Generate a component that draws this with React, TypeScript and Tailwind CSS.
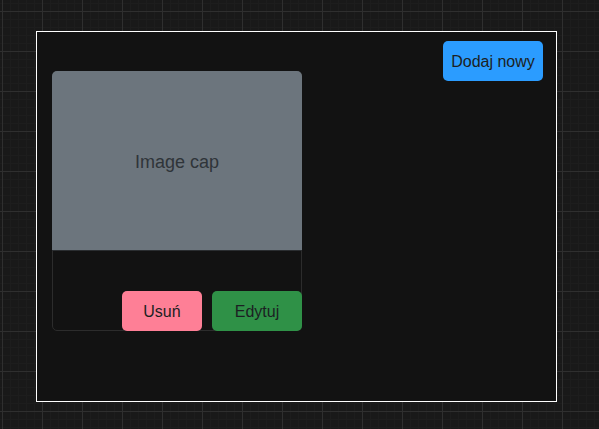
import React from "react";

export default function App() {
  return (
    <div
      className="w-full min-h-[429px] bg-[#191919] pt-[31px] pl-[36px] [background-image:linear-gradient(to_right,#2f2f2f_1px,transparent_1px),linear-gradient(to_bottom,#2f2f2f_1px,transparent_1px),linear-gradient(to_right,#1d1d1d_1px,transparent_1px),linear-gradient(to_bottom,#1d1d1d_1px,transparent_1px)] [background-size:40px_40px,40px_40px,8px_8px,8px_8px] [background-position:2px_11px,2px_11px,2px_11px,2px_11px]"
      style={{ fontFamily: '"Liberation Sans", Arial, sans-serif' }}
    >
      <div className="w-[521px] h-[371px] border border-white bg-[#121212] flex items-start">
        <div className="ml-[15px] mt-[39px] w-[250px] h-[260px] rounded-[5px] border border-[#2c2c2c] flex flex-col">
          <div className="h-[180px] -mx-px -mt-px pt-[4px] rounded-t-[5px] bg-[#6c757d] border-b border-[#2a2d30] flex items-center justify-center">
            <span className="text-[18px] text-[#2f3439]">Image cap</span>
          </div>
          <div className="flex-1 flex items-end justify-end gap-[10px] -mr-px -mb-px">
            <button className="w-[80px] h-[40px] pt-px rounded-[5px] bg-[#fe7f96] text-[16px] text-[#1c1f23]">
              Usuń
            </button>
            <button className="w-[90px] h-[40px] pt-px rounded-[5px] bg-[#2f9147] text-[16px] text-[#1c1f23]">
              Edytuj
            </button>
          </div>
        </div>
        <button className="ml-auto mt-[9px] mr-[13px] w-[100px] h-[40px] pt-px rounded-[5px] bg-[#2b9cff] text-[16px] text-[#1c1f23]">
          Dodaj nowy
        </button>
      </div>
    </div>
  );
}
